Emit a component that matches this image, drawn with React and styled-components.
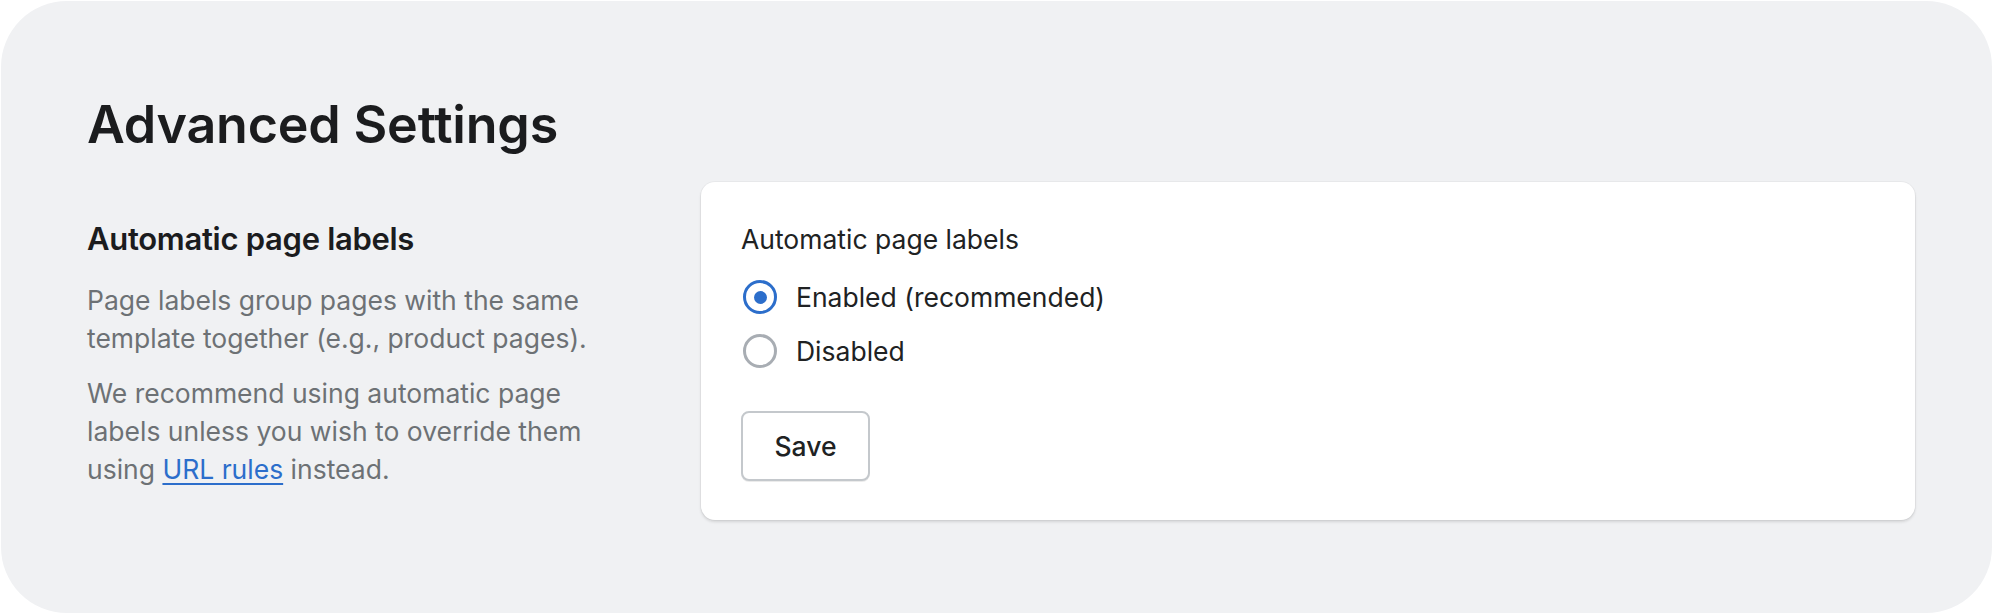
import React, { useState } from 'react';
import styled, { createGlobalStyle } from 'styled-components';

const GlobalStyle = createGlobalStyle`
  html, body {
    margin: 0;
    padding: 0;
    background: #ffffff;
  }
  body {
    font-family: Inter, "Noto Sans", "Liberation Sans", sans-serif;
    -webkit-font-smoothing: antialiased;
  }
`;

const Panel = styled.div`
  box-sizing: border-box;
  width: 1991px;
  height: 612px;
  margin: 1px 0 0 1px;
  background: #f0f1f3;
  border-radius: 66px;
  padding: 93px 77px 0 86px;
`;

const Title = styled.h1`
  margin: 0;
  font-size: 52px;
  line-height: 62px;
  font-weight: 600;
  letter-spacing: -0.2px;
  color: #1b1c1e;
`;

const Section = styled.section`
  display: flex;
  align-items: flex-start;
  gap: 80px;
  margin-top: 26px;
`;

const Aside = styled.div`
  width: 534px;
  flex-shrink: 0;
  padding-top: 37px;
`;

const AsideTitle = styled.h2`
  margin: 0 0 22px;
  font-size: 31px;
  line-height: 40px;
  font-weight: 600;
  letter-spacing: -0.3px;
  color: #1b1c1e;
`;

const Text = styled.p`
  margin: 0 0 17px;
  font-size: 26.5px;
  line-height: 38px;
  color: #6d7175;
`;

const TextLink = styled.a`
  color: #2c6ecb;
  text-decoration: underline;
  text-underline-offset: 4px;
  text-decoration-thickness: 2px;
`;

const Card = styled.div`
  flex: 1;
  box-sizing: border-box;
  height: 338px;
  background: #ffffff;
  border-radius: 14px;
  box-shadow: 0 2px 3px rgba(0, 0, 0, 0.12), 0 0 0 1px rgba(0, 0, 0, 0.03);
  padding: 38px 40px 39px;
  display: flex;
  flex-direction: column;
  align-items: flex-start;
`;

const FieldLabel = styled.div`
  font-size: 26.5px;
  line-height: 38px;
  color: #202223;
  margin-bottom: 17px;
`;

const Options = styled.div`
  display: flex;
  flex-direction: column;
  gap: 10px;
`;

const Option = styled.label`
  display: flex;
  align-items: center;
  gap: 19px;
  height: 44px;
  font-size: 26.5px;
  color: #202223;
  cursor: pointer;
`;

const Radio = styled.span`
  box-sizing: border-box;
  width: 34px;
  height: 34px;
  margin-left: 2px;
  border-radius: 50%;
  border: 3.5px solid ${p => (p.checked ? '#2c6ecb' : '#a8adb3')};
  background: #ffffff;
  display: flex;
  align-items: center;
  justify-content: center;

  &::after {
    content: '';
    width: 13px;
    height: 13px;
    border-radius: 50%;
    background: #2c6ecb;
    display: ${p => (p.checked ? 'block' : 'none')};
  }
`;

const SaveButton = styled.button`
  margin-top: 38px;
  width: 129px;
  height: 70px;
  box-sizing: border-box;
  background: #ffffff;
  border: 2px solid #c4c8cc;
  border-radius: 8px;
  box-shadow: 0 1px 0 rgba(0, 0, 0, 0.08);
  font-family: inherit;
  font-size: 26.5px;
  font-weight: 500;
  color: #202223;
  cursor: pointer;
`;

const options = [
  { value: 'enabled', label: 'Enabled (recommended)' },
  { value: 'disabled', label: 'Disabled' },
];

export default function App() {
  const [mode, setMode] = useState('enabled');

  return (
    <>
      <GlobalStyle />
      <Panel>
        <Title>Advanced Settings</Title>
        <Section>
          <Aside>
            <AsideTitle>Automatic page labels</AsideTitle>
            <Text>Page labels group pages with the same template together (e.g., product pages).</Text>
            <Text>
              We recommend using automatic page labels unless you wish to override them using{' '}
              <TextLink href="#">URL rules</TextLink> instead.
            </Text>
          </Aside>
          <Card>
            <FieldLabel>Automatic page labels</FieldLabel>
            <Options>
              {options.map(o => (
                <Option key={o.value} onClick={() => setMode(o.value)}>
                  <Radio checked={mode === o.value} />
                  {o.label}
                </Option>
              ))}
            </Options>
            <SaveButton>Save</SaveButton>
          </Card>
        </Section>
      </Panel>
    </>
  );
}
